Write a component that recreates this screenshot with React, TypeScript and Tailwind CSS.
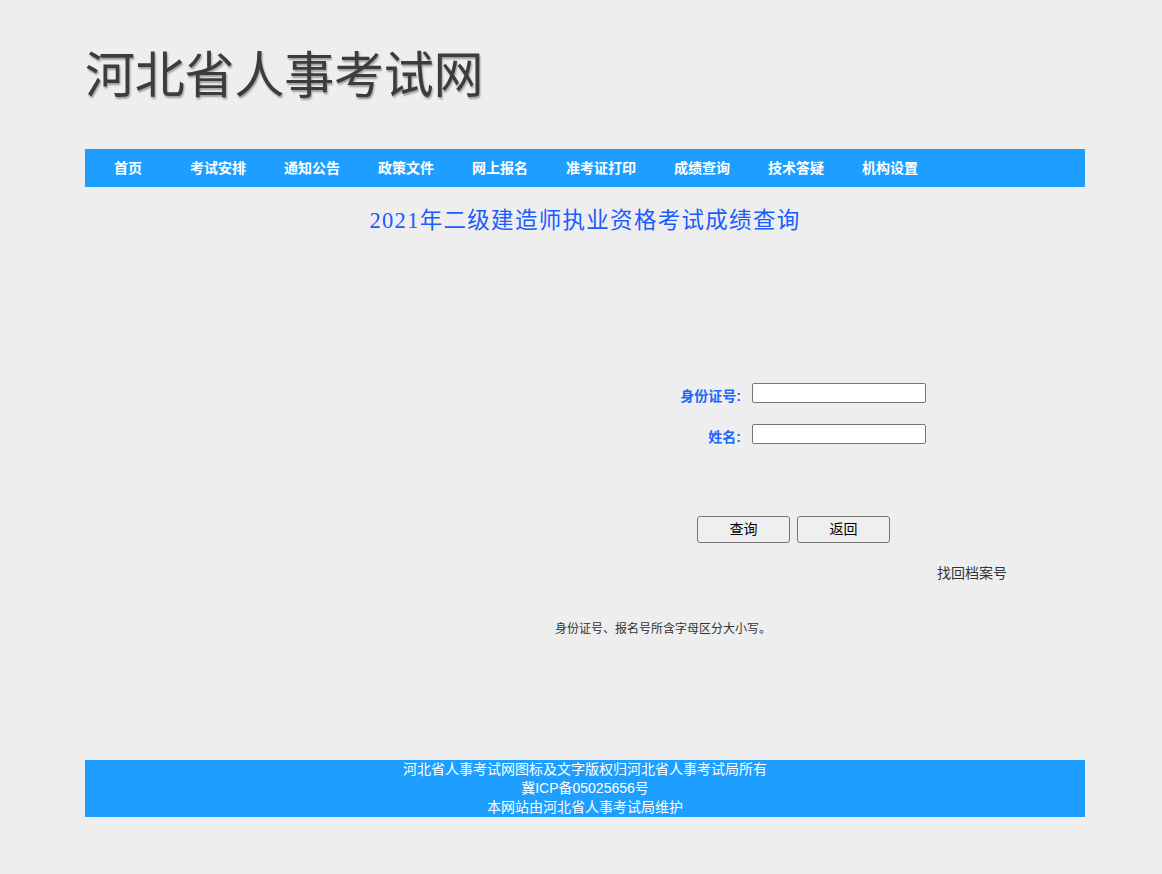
import React from "react";

const nav = ["首页", "考试安排", "通知公告", "政策文件", "网上报名", "准考证打印", "成绩查询", "技术答疑", "机构设置"];

export default function App() {
  return (
    <div className="min-h-[874px] bg-[#eeeeee]" style={{ fontFamily: '"Liberation Sans", "Noto Sans CJK SC", sans-serif' }}>
      <div className="mx-auto w-[1008px] pl-2">
        <div className="h-[149px] pt-[38px]">
          <div
            className="text-[50px] leading-[76px] text-[#3c3c3c] tracking-[-0.2px]"
            style={{ textShadow: "1px 2px 2px rgba(0,0,0,0.35)" }}
          >
            河北省人事考试网
          </div>
        </div>
        <div className="flex h-[38px] items-center bg-[#1e9fff] pl-[10px]">
          {nav.map((n, i) => (
            <span
              key={n}
              className={`text-[14px] font-bold text-white ${i === 0 ? "pl-[19px] pr-[29px]" : "px-[19px]"}`}
            >
              {n}
            </span>
          ))}
        </div>
        <div
          className="mt-[18px] text-center text-[22.5px] leading-[32px] tracking-[1.3px] text-[#1a5cff]"
          style={{ fontFamily: '"Liberation Serif", "Noto Sans CJK SC", serif' }}
        >
          2021年二级建造师执业资格考试成绩查询
        </div>
        <div className="mt-[146px] flex h-[20px] items-start">
          <div className="mt-[3px] w-[656px] text-right text-[14px] font-bold leading-[20px] text-[#1a66ff]">身份证号:</div>
          <input className="ml-[11px] h-[20px] w-[174px] rounded-[2px] border border-[#767676] bg-white" />
        </div>
        <div className="mt-[21px] flex h-[20px] items-start">
          <div className="mt-[3px] w-[656px] text-right text-[14px] font-bold leading-[20px] text-[#1a66ff]">姓名:</div>
          <input className="ml-[11px] h-[20px] w-[174px] rounded-[2px] border border-[#767676] bg-white" />
        </div>
        <div className="mt-[72px] flex pl-[612px]">
          <button className="h-[27px] w-[93px] rounded-[3px] border border-[#767676] bg-[#efefef] text-[14px] text-black">查询</button>
          <button className="ml-[7px] h-[27px] w-[93px] rounded-[3px] border border-[#767676] bg-[#efefef] text-[14px] text-black">返回</button>
        </div>
        <div className="mt-[21px] pl-[852px] text-[14px] leading-[18px] text-[#333333]">找回档案号</div>
        <div className="mt-[39px] pl-[470px] text-[12px] leading-[16px] text-[#333333]">身份证号、报名号所含字母区分大小写。</div>
        <div className="mt-[123px] h-[57px] bg-[#1e9fff] text-center text-[14px] leading-[19px] text-white">
          <div>河北省人事考试网图标及文字版权归河北省人事考试局所有</div>
          <div>冀ICP备05025656号</div>
          <div>本网站由河北省人事考试局维护</div>
        </div>
      </div>
    </div>
  );
}
